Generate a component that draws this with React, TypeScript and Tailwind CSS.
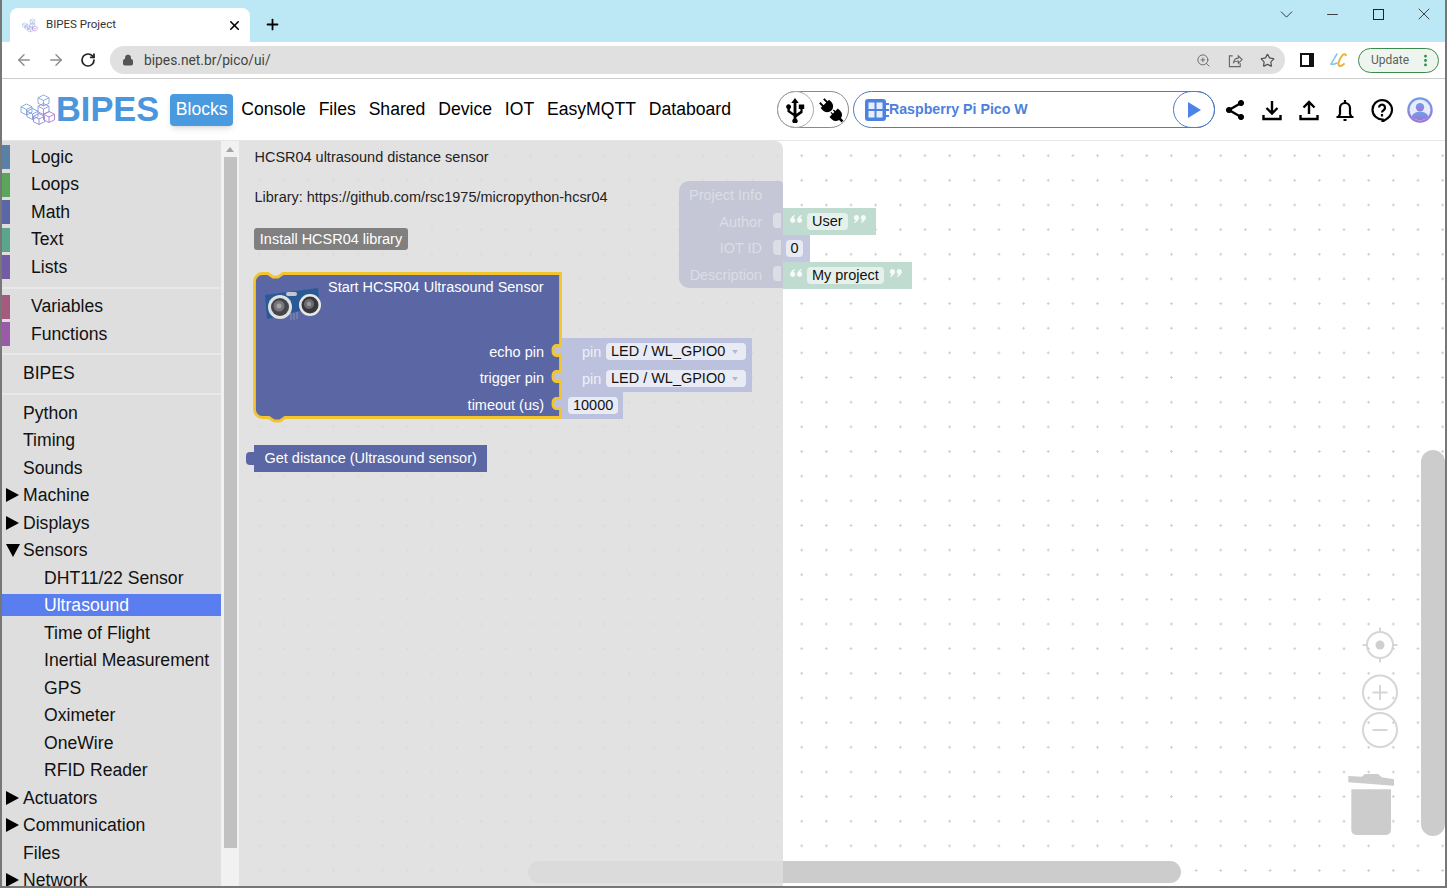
import { ArrowLeft, ArrowRight, ChevronDown, Lock, Minus, MoreVertical, Plus, RotateCw, Star, X, ZoomIn } from "lucide-react";

// One isometric cube of the BIPES logo
const Cube = ({ x, y, s, c }: { x: number; y: number; s: number; c: string }) => (
  <g fill="none" stroke={c} strokeWidth={0.9} strokeLinejoin="round">
    <path d={`M${x} ${y - s}L${x + s} ${y - s / 2}V${y + s / 2}L${x} ${y + s}L${x - s} ${y + s / 2}V${y - s / 2}Z`} />
    <path d={`M${x - s} ${y - s / 2}L${x} ${y}L${x + s} ${y - s / 2}M${x} ${y}V${y + s}`} />
  </g>
);

const Logo = ({ className }: { className: string }) => (
  <svg viewBox="0 0 36 32" className={className}>
    <Cube x={6.5} y={15.5} s={5.5} c="#7aa6e0" />
    <Cube x={12.5} y={20} s={5.5} c="#7f9bdc" />
    <Cube x={19} y={25} s={5.5} c="#8f88d4" />
    <Cube x={23.5} y={6.500} s={5.5} c="#88a0dc" />
    <Cube x={23.5} y={15} s={5.5} c="#8f92d8" />
    <Cube x={29} y={23} s={5.5} c="#a37fcf" />
  </svg>
);

const CategoryRow = ({ label, color }: { label: string; color: string }) => (
  <div className="flex h-[27.5px] items-center">
    <span className={`h-6 w-2 shrink-0 ${color}`} />
    <span className="ml-[21px]">{label}</span>
  </div>
);

const TreeRow = ({ label, arrow, active, child }: { label: string; arrow?: "right" | "down"; active?: boolean; child?: boolean }) => (
  <div className="flex h-[27.5px] items-center">
    <div className={`flex h-[22px] w-full items-center ${active ? "bg-[#5a7df0] text-white" : ""}`}>
      <span className="flex w-[21px] shrink-0 justify-center">
        {arrow === "right" && <span className="h-0 w-0 border-y-[7px] border-l-[13px] border-y-transparent border-l-black" />}
        {arrow === "down" && <span className="h-0 w-0 border-x-[7px] border-t-[13px] border-x-transparent border-t-black" />}
      </span>
      <span className={child ? "ml-[21px]" : ""}>{label}</span>
    </div>
  </div>
);

const Divider = ({ className }: { className: string }) => <div className={`border-b-2 border-[#e8e8e8] ${className}`} />;

const Sidebar = () => (
  <aside className="flex w-[237px] shrink-0 font-['Liberation_Sans',sans-serif] text-[17.6px] text-[#111]">
    <div className="h-full w-[219px] shrink-0 overflow-hidden bg-[#dedede] pt-[2.25px]">
      <CategoryRow label="Logic" color="bg-[#5b80a5]" />
      <CategoryRow label="Loops" color="bg-[#5ba55b]" />
      <CategoryRow label="Math" color="bg-[#5b67a5]" />
      <CategoryRow label="Text" color="bg-[#5ba58c]" />
      <CategoryRow label="Lists" color="bg-[#745ba5]" />
      <Divider className="mb-[4px] h-[8px]" />
      <CategoryRow label="Variables" color="bg-[#a55b80]" />
      <CategoryRow label="Functions" color="bg-[#995ba5]" />
      <Divider className="mb-[4.5px] h-[7px]" />
      <TreeRow label="BIPES" />
      <Divider className="mb-[4.4px] h-[8px]" />
      <TreeRow label="Python" />
      <TreeRow label="Timing" />
      <TreeRow label="Sounds" />
      <TreeRow label="Machine" arrow="right" />
      <TreeRow label="Displays" arrow="right" />
      <TreeRow label="Sensors" arrow="down" />
      <TreeRow label="DHT11/22 Sensor" child />
      <TreeRow label="Ultrasound" child active />
      <TreeRow label="Time of Flight" child />
      <TreeRow label="Inertial Measurement" child />
      <TreeRow label="GPS" child />
      <TreeRow label="Oximeter" child />
      <TreeRow label="OneWire" child />
      <TreeRow label="RFID Reader" child />
      <TreeRow label="Actuators" arrow="right" />
      <TreeRow label="Communication" arrow="right" />
      <TreeRow label="Files" />
      <TreeRow label="Network" arrow="right" />
    </div>
    <div className="flex h-full w-[18px] flex-col items-center bg-[#f1f1f1]">
      <span className="mt-[6px] h-0 w-0 border-x-[4px] border-b-[5px] border-x-transparent border-b-[#a3a3a3]" />
      <div className="mt-[5px] h-[691px] w-[13px] bg-[#c1c1c1]" />
    </div>
  </aside>
);

// Pins on the Blockly workspace: placed at their canvas coordinates
const Label = ({ x, y, right, children, className }: { x: number; y: number; right?: boolean; children: React.ReactNode; className?: string }) => (
  <span
    className={`absolute flex h-5 items-center whitespace-nowrap ${className ?? "text-white"}`}
    style={right ? { right: 1206 - x, top: y - 10 } : { left: x, top: y - 10 }}
  >
    {children}
  </span>
);

const Field = ({ x, y, w, children }: { x: number; y: number; w: number; children: React.ReactNode }) => (
  <span
    className="absolute flex h-[17px] items-center rounded-[4px] bg-[#e9ebf4] px-[5px] pt-px whitespace-nowrap text-[#111]"
    style={{ left: x, top: y - 8.5, width: w }}
  >
    {children}
  </span>
);

const PinBlock = ({ top }: { top: number }) => (
  <div className="absolute left-[323px] h-[26.5px] w-[190px] bg-[#bcc1dd]" style={{ top }}>
    <span className="absolute left-[20px] top-[4px] text-[#eef0f8]">pin</span>
    <span className="absolute left-[44px] top-[5px] flex h-[17px] w-[140px] items-center rounded-[4px] bg-[#e9ebf4] pl-[5px] pt-px whitespace-nowrap text-[#111]">
      LED / WL_GPIO0
      <span className="absolute right-[8px] top-[7px] h-0 w-0 border-x-[3px] border-t-[4px] border-x-transparent border-t-[#b5b9d0]" />
    </span>
  </div>
);

const Quote = ({ left, flip }: { left: number; flip?: boolean }) => (
  <svg viewBox="0 0 11 7" className={`absolute top-[7px] h-[8px] w-[13px] ${flip ? "rotate-180" : ""}`} style={{ left }} fill="#f6faf8">
    <circle cx="2.200" cy="4.700" r="2.200" />
    <path d="M.2 4.500C.4 2.200 1.800.5 4 0L4.300.8C3.100 1.300 2.600 2.300 2.800 3.500Z" />
    <circle cx="8.200" cy="4.700" r="2.200" />
    <path d="M6.200 4.500C6.400 2.200 7.800.5 10 0L10.300.8C9.100 1.300 8.600 2.300 8.800 3.500Z" />
  </svg>
);

const QuoteBlock = ({ top, w, h, text, fw }: { top: number; w: number; h: number; text: string; fw: number }) => (
  <div className="absolute left-[544px] bg-[#c0dbd0]" style={{ top, width: w, height: h }}>
    <Quote left={7} />
    <span className="absolute left-[24px] top-[5px] flex h-[17px] items-center rounded-[4px] bg-[#e6f1ec] px-[5px] pt-px whitespace-nowrap text-[#111]" style={{ width: fw }}>
      {text}
    </span>
    <Quote left={fw + 29} flip />
  </div>
);

const Ultrasonic = () => (
  <svg viewBox="0 0 64 40" className="absolute left-[21px] top-[144px] h-[40px] w-[64px]">
    <path d="M5 10L58 3L60 21L7 34Z" fill="#2a5a96" />
    <rect x="26" y="7" width="11" height="4" rx="2" fill="#c4c8cc" />
    <path d="M31 28v7M34 28v7M37 27v7" stroke="#8d90a8" strokeWidth="1" />
    <circle cx="20" cy="22" r="12" fill="#dfe2e2" />
    <circle cx="20" cy="22" r="9" fill="#45454c" />
    <circle cx="19" cy="21" r="5.500" fill="#77777c" />
    <circle cx="19" cy="21" r="2.500" fill="#a5a5a8" />
    <circle cx="50" cy="20" r="11" fill="#e8e8e6" />
    <circle cx="50" cy="20" r="8.500" fill="#38383c" />
    <circle cx="49" cy="19" r="5" fill="#6c6c70" />
    <circle cx="49" cy="19" r="2.200" fill="#9a9a9c" />
  </svg>
);

const Canvas = () => (
  <main className="relative h-full min-w-0 flex-1 overflow-hidden bg-white font-['Liberation_Sans',sans-serif] text-[14.47px]">
    <svg className="absolute inset-0 h-full w-full">
      <defs>
        <pattern id="dots" x="8.1" y="2.35" width="24.65" height="24.65" patternUnits="userSpaceOnUse">
          <path d="M12.3 10.8v3M10.8 12.3h3" stroke="#cfcfcf" strokeWidth="1" />
        </pattern>
      </defs>
      <rect width="100%" height="100%" fill="url(#dots)" />
    </svg>

    {/* workspace scrollbars */}
    <div className="absolute left-[289px] top-[720px] h-[22px] w-[653px] rounded-full bg-[#cccccc]" />
    <div className="absolute left-[1182px] top-[309px] h-[386px] w-[24px] rounded-full bg-[#cccccc]" />

    {/* flyout */}
    <div className="absolute inset-y-0 left-0 w-[544px] rounded-tr-[8px] bg-[#dddddd]/85" />

    {/* Project Info block */}
    <div className="absolute left-[440px] top-[40px] h-[107px] w-[104px] rounded-l-[10px] rounded-tr-[4px] bg-[#c5c7d6] text-[#dcdde5]">
      <span className="absolute left-[10px] top-[4px]">Project Info</span>
      <span className="absolute right-[21px] top-[31px]">Author</span>
      <span className="absolute right-[21px] top-[57px]">IOT ID</span>
      <span className="absolute right-[21px] top-[84px]">Description</span>
      <span className="absolute right-[2px] top-[32px] h-[15px] w-[8px] rounded-l-[4px] bg-[#dcdde5]" />
      <span className="absolute right-[2px] top-[59px] h-[15px] w-[8px] rounded-l-[4px] bg-[#dcdde5]" />
      <span className="absolute right-[2px] top-[85px] h-[15px] w-[8px] rounded-l-[4px] bg-[#dcdde5]" />
    </div>
    <QuoteBlock top={67} w={93} h={26.5} text="User" fw={41} />
    <div className="absolute left-[544px] top-[94px] h-[26.5px] w-[27px] bg-[#c3c7e0]">
      <span className="absolute left-[3px] top-[5px] flex h-[17px] w-[17px] items-center justify-center rounded-[4px] bg-[#e9ebf4] pt-px text-[#111]">0</span>
    </div>
    <QuoteBlock top={120.5} w={129} h={27} text="My project" fw={77} />

    {/* flyout text */}
    <Label x={15.5} y={17} className="text-[#222]">HCSR04 ultrasound distance sensor</Label>
    <Label x={15.5} y={57} className="text-[#222]">Library: https://github.com/rsc1975/micropython-hcsr04</Label>
    <button className="absolute left-[15px] top-[87px] flex h-[22px] w-[154px] items-center justify-center rounded-[3px] bg-[#808080] pt-px whitespace-nowrap text-white">
      Install HCSR04 library
    </button>

    {/* Start block */}
    <PinBlock top={197} />
    <PinBlock top={224} />
    <div className="absolute left-[323px] top-[250.5px] h-[27px] w-[61px] bg-[#bcc1dd]" />
    <svg viewBox="0 0 320 160" className="absolute left-[10px] top-[127px] h-[160px] w-[320px]">
      <path d="M302 76h12v14h-12zM302 102h12v14h-12zM302 129h12v14h-12z" fill="#bcc1dd" />
      <path
        d="M13 5.500H19L24 9H29L34 5.500H311.500V77.500H308a3.500 3.500 0 0 0-4 3.500v3a3.500 3.500 0 0 0 4 3.500H311.500V103.500H308a3.500 3.500 0 0 0-4 3.500v3a3.500 3.500 0 0 0 4 3.500H311.500V130.500H308a3.500 3.500 0 0 0-4 3.500v3a3.500 3.500 0 0 0 4 3.500H311.500V149.500H36L31 153H25L20 149.500H13A8 8 0 0 1 5.500 141.500V13.500A8 8 0 0 1 13 5.500Z"
        fill="#5b67a5"
        stroke="#f2c52e"
        strokeWidth="2.800"
      />
    </svg>
    <Ultrasonic />
    <Label x={89} y={147}>Start HCSR04 Ultrasound Sensor</Label>
    <Label x={305} y={212} right>echo pin</Label>
    <Label x={305} y={238} right>trigger pin</Label>
    <Label x={305} y={265} right>timeout (us)</Label>
    <Field x={329} y={264.5} w={50}>10000</Field>

    {/* Get distance block */}
    <div className="absolute left-[15px] top-[304px] flex h-[27px] w-[233px] items-center bg-[#5b67a5] pl-[10.5px] pt-px whitespace-nowrap text-white">Get distance (Ultrasound sensor)</div>
    <span className="absolute left-[7px] top-[311px] h-[13px] w-[8px] rounded-l-[4px] bg-[#5b67a5]" />

    {/* workspace controls */}
    <svg viewBox="0 0 60 215" className="absolute left-[1106px] top-[484px] h-[215px] w-[60px]" fill="none" stroke="#d6d6d6" strokeWidth="2">
      <circle cx="35" cy="20" r="13" />
      <circle cx="35" cy="20" r="4.500" fill="#cfcfcf" stroke="none" />
      <path d="M35 2.500v5M35 32.500v5M17.500 20h5M47.500 20h5" />
      <circle cx="35" cy="67.500" r="17" />
      <path d="M35 60v15M27.500 67.500h15" />
      <circle cx="35" cy="105" r="17" />
      <path d="M27.500 105h15" />
      <path d="M3.300 151L16.700 151.700L20 149H33L36.700 152.300L49 154.300V160.700L3.300 157.300Z" fill="#cccccc" stroke="none" />
      <path d="M6.300 164.300H46V205a5 5 0 0 1-5 5H11.300a5 5 0 0 1-5-5Z" fill="#cccccc" stroke="none" />
    </svg>
  </main>
);

const SolidIcon = ({ children }: { children: React.ReactNode }) => (
  <svg viewBox="0 0 24 24" className="h-[26px] w-[26px] shrink-0" fill="black">{children}</svg>
);

const Header = () => (
  <header className="flex h-[62px] shrink-0 items-center border-b border-[#e6e6e6] bg-white font-['Liberation_Sans',sans-serif] text-[17.6px] text-black">
    <Logo className="ml-[18px] h-[32px] w-[36px]" />
    <span className="text-[34.4px] font-bold leading-none text-[#4b96dc]">BIPES</span>
    <span className="ml-[11px] flex h-[32px] w-[63px] items-center justify-center rounded-[4px] bg-[#4a9ae0] text-white shadow-md">Blocks</span>
    <nav className="ml-[8px] flex gap-[12.85px]">
      <span>Console</span>
      <span>Files</span>
      <span>Shared</span>
      <span>Device</span>
      <span>IOT</span>
      <span>EasyMQTT</span>
      <span>Databoard</span>
    </nav>
    <div className="ml-[46px] flex h-[37px] w-[72px] items-center rounded-full border border-[#8a8a8a]">
      <span className="-ml-px flex h-[37px] w-[37px] shrink-0 items-center justify-center rounded-full border border-[#aaaaaa]">
        <SolidIcon>
          <path d="M12 1l3.500 4.500h-2.200v10l3.700-2.500v-2h-1.500v-4h5v4h-1.500v3.600l-5.700 4v1.400a2.500 2.500 0 1 1-2.600 0v-2.500l-5.700-4v-2.500a2.300 2.300 0 1 1 2.200 0v1.400l3.500 2.500V5.500H8.500z" />
        </SolidIcon>
      </span>
      <span className="ml-[4px]">
        <SolidIcon>
          <g transform="rotate(-45 12 12)">
            <path d="M8.500 0h1.800v4H8.500zM13.700 0h1.800v4h-1.800zM6.500 4h11v3a5.500 5.500 0 0 1-11 0z" />
            <path d="M6.500 18.500v-3h3.300v-2h1.200v2h2v-2h1.200v2h3.300v3a5.500 5.500 0 0 1-4.300 5.300V27h-2.400v-3.200a5.500 5.500 0 0 1-4.300-5.300z" />
          </g>
        </SolidIcon>
      </span>
    </div>
    <div className="relative ml-[4px] flex h-[37px] w-[362px] items-center rounded-full border border-[#4f7cc4] pl-[11px]">
      <svg viewBox="0 0 24 22" className="h-[22px] w-[24px] shrink-0">
        <rect x="0" y="0" width="21" height="22" rx="3" fill="#4d82e0" />
        <path d="M3.500 3.500h6v6.500h-6zM11.500 3.500h6v6.500h-6zM3.500 12h6v6.500h-6zM11.500 12h6v6.500h-6z" fill="#e8effc" />
        <path d="M21 5h3M21 11h3M21 17h3" stroke="#4d82e0" strokeWidth="2" />
      </svg>
      <span className="text-[14.2px] font-bold whitespace-nowrap text-[#4d7fdc]">Raspberry Pi Pico W</span>
      <span className="absolute right-[-1px] top-[-1px] flex h-[37px] w-[42px] items-center justify-center rounded-full border border-[#4f7cc4]">
        <span className="ml-[2px] h-0 w-0 border-y-[8px] border-l-[13px] border-y-transparent border-l-[#4d82e8]" />
      </span>
    </div>
    <div className="ml-[8px] flex items-center gap-[12.8px]">
      <svg viewBox="0 0 24 24" className="h-[24px] w-[24px]" fill="black" stroke="black">
        <path d="M18 5L6 12l12 7" fill="none" strokeWidth="2.400" />
        <circle cx="18" cy="5" r="2.600" />
        <circle cx="6" cy="12" r="2.600" />
        <circle cx="18" cy="19" r="2.600" />
      </svg>
      <svg viewBox="0 0 24 24" className="h-[24px] w-[24px]" fill="none" stroke="black" strokeWidth="2.400">
        <path d="M12 3v12M6.500 10l5.500 5.500 5.500-5.500M3.500 17v4h17v-4" />
      </svg>
      <svg viewBox="0 0 24 24" className="h-[24px] w-[24px]" fill="none" stroke="black" strokeWidth="2.400">
        <path d="M12 16V4M6.500 9.500L12 4l5.500 5.500M3.500 17v4h17v-4" />
      </svg>
      <svg viewBox="0 0 24 24" className="h-[24px] w-[24px]" fill="none" stroke="black" strokeWidth="2.200">
        <path d="M3.500 19h17M5.500 19l1.500-3V10a5 5 0 0 1 10 0v6l1.500 3M12 2v3M10.500 22h3" />
      </svg>
      <svg viewBox="0 0 24 24" className="h-[24px] w-[24px]" fill="none" stroke="black" strokeWidth="2.200">
        <path d="M12 2a10 10 0 0 1 10 10c0 5-3.500 8.500-9.500 11.500v-2A9.750 9.750 0 0 1 12 2z" />
        <path d="M9 9.500a3 3 0 1 1 4.500 2.700c-1 .6-1.500 1.200-1.500 2.300M12 16v2.500" />
      </svg>
      <svg viewBox="0 0 28 28" className="h-[26px] w-[26px]">
        <defs>
          <linearGradient id="avatar" x1="0" y1="0" x2="0" y2="1">
            <stop offset="0" stopColor="#6f9fe8" />
            <stop offset="1" stopColor="#9b78d8" />
          </linearGradient>
        </defs>
        <circle cx="14" cy="14" r="12.500" fill="#e6ecfa" stroke="url(#avatar)" strokeWidth="2.500" />
        <circle cx="14" cy="11" r="4.500" fill="url(#avatar)" />
        <path d="M5 21c2-4 5-5 9-5s7 1 9 5a12 12 0 0 1-18 0z" fill="url(#avatar)" />
      </svg>
    </div>
  </header>
);

const BrowserChrome = () => (
  <div className="shrink-0 font-['Roboto',sans-serif] text-[#333]">
    <div className="flex h-[42px] items-end bg-[#bce7f4]">
      <div className="ml-[8px] flex h-[34px] w-[240px] items-center rounded-t-[8px] bg-white pl-[12px] pr-[8px] text-[11.5px]">
        <Logo className="h-[15px] w-[16px]" />
        <span className="ml-[8px] flex-1">BIPES Project</span>
        <X className="h-[15px] w-[15px] text-black" strokeWidth={2.500} />
      </div>
      <Plus className="mb-[9px] ml-[14px] h-[17px] w-[17px] text-black" strokeWidth={2.500} />
      <div className="mb-[17.5px] -mr-[2px] ml-auto flex items-center text-[#333]">
        <span className="flex w-[46px] justify-center"><ChevronDown className="h-[21px] w-[21px]" strokeWidth={1.100} /></span>
        <span className="flex w-[46px] justify-center"><Minus className="h-[17px] w-[17px]" strokeWidth={1.300} /></span>
        <span className="flex w-[46px] justify-center"><span className="h-[11px] w-[11px] border border-[#222]" /></span>
        <span className="flex w-[46px] justify-center"><X className="h-[20px] w-[20px]" strokeWidth={1.100} /></span>
      </div>
    </div>
    <div className="flex h-[37px] items-center border-b border-[#cccccc] bg-white">
      <ArrowLeft className="ml-[13px] h-[18px] w-[18px] text-[#8f8f8f]" strokeWidth={2} />
      <ArrowRight className="ml-[14px] h-[18px] w-[18px] text-[#8f8f8f]" strokeWidth={2} />
      <RotateCw className="ml-[15px] h-[16px] w-[16px] text-[#222]" strokeWidth={2.600} />
      <div className="ml-[14px] flex h-[28px] w-[1175px] items-center rounded-full bg-[#e0e0e0] pl-[12px] pr-[10px] text-[13.8px]">
        <Lock className="h-[12px] w-[12px] fill-[#555] text-[#555]" strokeWidth={2} />
        <span className="ml-[10px] flex-1 text-[#444]">bipes.net.br/pico/ui/</span>
        <ZoomIn className="h-[15px] w-[15px] text-[#666]" strokeWidth={1.500} />
        <svg viewBox="0 0 16 16" className="ml-[17px] h-[15px] w-[15px]" fill="none" stroke="#666" strokeWidth="1.200">
          <path d="M6 10c.5-3 2.500-4.500 5-4.500V3l4 4-4 4V8.500c-2 0-3.800.3-5 1.500zM5 3H1.500v11.500H13V11" />
        </svg>
        <Star className="ml-[17px] h-[15px] w-[15px] text-[#555]" strokeWidth={2} />
      </div>
      <span className="ml-[15px] h-[14px] w-[14px] shrink-0 border-y-[2px] border-l-[2.5px] border-r-[5px] border-[#111] bg-white" />
      <svg viewBox="0 0 20 16" className="ml-[15px] h-[16px] w-[20px] shrink-0" fill="none" strokeWidth="1.500" strokeLinecap="round">
        <path d="M8 2C6 5 4 9 2 12c2 1 4 0 6-1" stroke="#7cc3ea" />
        <path d="M17 3c-2-2-4 0-6 4s-2 7 0 7 3-1 4-2" stroke="#e8b13a" strokeWidth="1.800" />
      </svg>
      <span className="ml-[9px] flex h-[25px] w-[81px] shrink-0 items-center rounded-full border border-[#3f8a4f] bg-[#eef5ef] pl-[12px] text-[12px] text-[#55645a]">
        Update
        <MoreVertical className="ml-[9px] h-[15px] w-[15px] text-[#2f8a47]" strokeWidth={2.500} />
      </span>
    </div>
  </div>
);

export default function App() {
  return (
    <div className="flex h-[888px] w-[1447px] flex-col overflow-hidden border-x-2 border-b-2 border-x-[#777777] border-b-[#777777] bg-white">
      <BrowserChrome />
      <Header />
      <div className="flex min-h-0 flex-1">
        <Sidebar />
        <Canvas />
      </div>
    </div>
  );
}
